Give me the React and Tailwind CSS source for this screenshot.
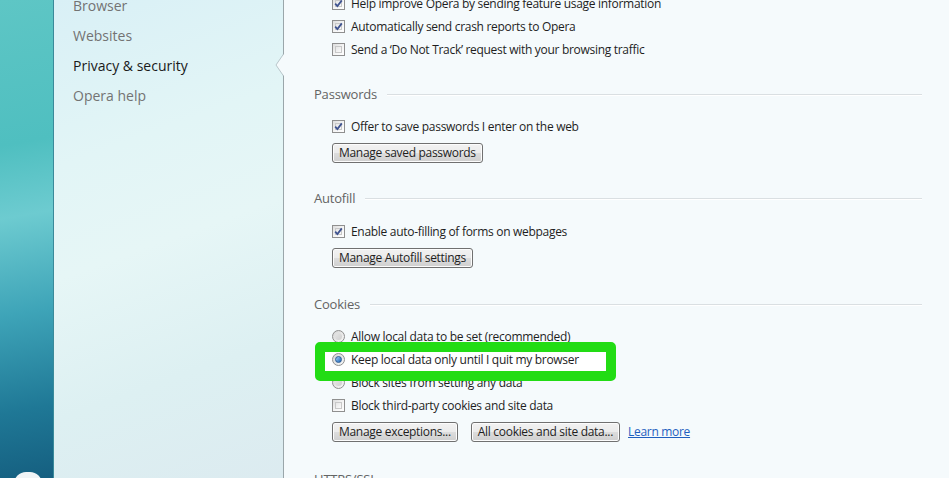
import React from "react";

const font = { fontFamily: '"Open Sans", "Noto Sans", sans-serif' };

function Checkbox({ checked }) {
  return (
    <span className="relative inline-flex h-[13px] w-[13px] shrink-0 items-center justify-center border border-[#8f8f8f] bg-gradient-to-br from-[#dcdcdc] via-[#f4f4f4] to-[#ffffff]">
      <span className="absolute inset-[2px] border border-[#c8c8c8] bg-gradient-to-br from-[#e6e6e6] to-[#fafafa]" />
      {checked ? (
        <svg viewBox="0 0 11 11" className="relative h-[11px] w-[11px]">
          <path d="M2.2 5.6 L4.4 8 L8.8 2.4" fill="none" stroke="#3f5390" strokeWidth="1.8" />
        </svg>
      ) : null}
    </span>
  );
}

function Radio({ checked }) {
  return (
    <span className="inline-flex h-[13px] w-[13px] shrink-0 items-center justify-center rounded-full border border-[#8f8f8f] bg-gradient-to-br from-[#d6d6d6] to-[#f8f8f8]">
      {checked ? (
        <span className="h-[7px] w-[7px] rounded-full border border-[#2c5b94] bg-gradient-to-br from-[#9fd0f5] to-[#1b63b5]" />
      ) : (
        <span className="h-[7px] w-[7px] rounded-full bg-gradient-to-br from-[#e6e6e6] to-[#cfcfcf]" />
      )}
    </span>
  );
}

function Row({ children, control, className = "" }) {
  return (
    <div className={`flex h-[23px] items-center gap-[6px] pl-[18px] ${className}`}>
      {control}
      <span className="whitespace-nowrap text-[12px] tracking-[-0.3px] text-[#1e1e1e]">{children}</span>
    </div>
  );
}

function Button({ children }) {
  return (
    <button className="h-[20px] rounded-[3px] border border-[#707070] bg-[linear-gradient(#f2f2f2_0%,#ebebeb_50%,#dddddd_50%,#cfcfcf_100%)] px-[6px] text-[12px] leading-none tracking-[-0.3px] text-[#1e1e1e] shadow-[inset_0_0_0_1px_#fcfcfc]">
      {children}
    </button>
  );
}

function Header({ title, className = "" }) {
  return (
    <div className={`flex h-[22px] items-center gap-[10px] ${className}`}>
      <span className="whitespace-nowrap text-[13px] tracking-[-0.2px] text-[#646464]">{title}</span>
      <div className="h-[2px] flex-1 border-t border-[#dadfe2] bg-white" />
    </div>
  );
}

export default function App() {
  return (
    <div className="flex h-[478px] w-full overflow-hidden bg-[#f5fafc]" style={font}>
      {/* left teal strip */}
      <div className="relative w-[54px] shrink-0 border-r border-[#3a8a9a] bg-[linear-gradient(170deg,#5ec6c5_0%,#4fbfc0_30%,#6dcbd0_45%,#3ea4b8_65%,#1f7896_85%,#155f80_100%)]">
        <div className="absolute left-[14px] top-[472px] h-[24px] w-[28px] rounded-full bg-[#f0f4f6]" />
      </div>

      {/* sidebar */}
      <div className="relative w-[230px] shrink-0 border-r border-[#9aa6aa] bg-[linear-gradient(160deg,#d9f0f6_0%,#e2f5f6_30%,#e6f6f6_50%,#ddf0f2_75%,#dcebf0_100%)]">
        <nav className="-mt-[9px] flex flex-col pl-[19px] text-[14px]">
          <span className="h-[30px] leading-[30px] text-[#737373]">Browser</span>
          <span className="h-[30px] leading-[30px] text-[#737373]">Websites</span>
          <span className="h-[30px] leading-[30px] text-[#1a1a1a]">Privacy &amp; security</span>
          <span className="h-[30px] leading-[30px] text-[#737373]">Opera help</span>
        </nav>
        <svg viewBox="0 0 9 22" className="absolute -right-px top-[54px] h-[22px] w-[9px]">
          <path d="M9 0 L1 11 L9 22 Z" fill="#f5fafc" />
          <path d="M8.5 0 L1 11 L8.5 22" fill="none" stroke="#b9c6ca" strokeWidth="1" />
        </svg>
      </div>

      {/* content */}
      <div className="min-w-0 flex-1 pl-[30px] pr-[27px]">
        <div className="-mt-[8px]">
          <Row control={<Checkbox checked />}>Help improve Opera by sending feature usage information</Row>
          <Row control={<Checkbox checked />}>Automatically send crash reports to Opera</Row>
          <Row control={<Checkbox />}>Send a ‘Do Not Track’ request with your browsing traffic</Row>
        </div>

        <Header title="Passwords" className="mt-[23px]" />
        <Row control={<Checkbox checked />} className="mt-[9px]">Offer to save passwords I enter on the web</Row>
        <div className="mt-[5px] flex pl-[18px]">
          <Button>Manage saved passwords</Button>
        </div>

        <Header title="Autofill" className="mt-[25px]" />
        <Row control={<Checkbox checked />} className="mt-[10px]">Enable auto-filling of forms on webpages</Row>
        <div className="mt-[5px] flex pl-[18px]">
          <Button>Manage Autofill settings</Button>
        </div>

        <Header title="Cookies" className="mt-[26px]" />
        <div className="relative mt-[9px]">
          <Row control={<Radio />}>Allow local data to be set (recommended)</Row>
          <Row control={<Radio checked />} className="relative z-10">Keep local data only until I quit my browser</Row>
          <Row control={<Radio />}>Block sites from setting any data</Row>
          <Row control={<Checkbox />}>Block third-party cookies and site data</Row>
          <div className="absolute left-[1px] top-[17px] z-[5] h-[39px] w-[301px] rounded-[5px] border-[10px] border-[#22dc14] bg-white" />
        </div>
        <div className="mt-[5px] flex items-center gap-[13px] pl-[18px]">
          <Button>Manage exceptions...</Button>
          <Button>All cookies and site data...</Button>
          <a className="-ml-[5px] text-[12px] tracking-[-0.3px] text-[#1f5fbf] underline">Learn more</a>
        </div>

        <Header title="HTTPS/SSL" className="mt-[27px]" />
      </div>
    </div>
  );
}
